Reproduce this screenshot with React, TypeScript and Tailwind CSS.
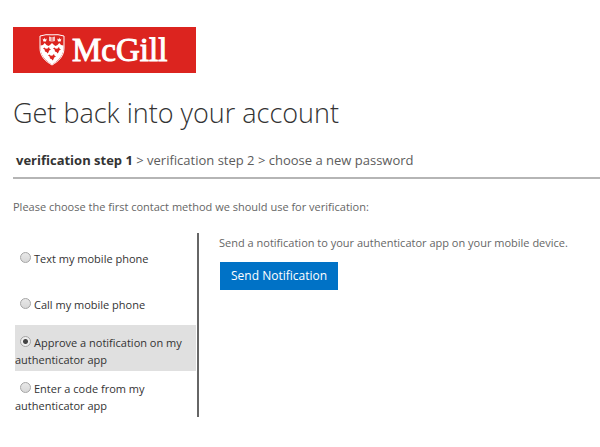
import React, { useState } from 'react'
import clsx from 'clsx'

interface ContactMethod {
  id: string
  label: string
}

const methods: ContactMethod[] = [
  { id: 'text', label: 'Text my mobile phone' },
  { id: 'call', label: 'Call my mobile phone' },
  { id: 'notification', label: 'Approve a notification on my authenticator app' },
  { id: 'code', label: 'Enter a code from my authenticator app' }
]

// Small red bird used three times on the shield
function Martlet({ x, y }: { x: number; y: number }) {
  return (
    <path
      transform={`translate(${x} ${y})`}
      d="M0 1.5 1.4.6 2.4 1.6 4.2 1.8 6 0 6.6 1.8 8 2.6 6.2 3.4 5.4 5.4 4.4 6.4 3.8 5.2 2 4.6 1.6 2.6Z"
      fill="#dc241f"
    />
  )
}

function Shield() {
  return (
    <svg width="26" height="32" viewBox="0 0 26 32" aria-hidden="true">
      <path
        d="M1 2Q7 0 13 .8 19 0 25 2V14C25 22 20 27 13 31 6 27 1 22 1 14Z"
        fill="#dc241f"
        stroke="#fff"
        strokeWidth="1"
      />
      {/* Book between the two crowns */}
      <path d="M10 2.5 13 3.2 16 2.5V7L13 7.7 10 7Z" fill="#f6c5c3" />
      <path d="M13 3.2V7.7" stroke="#dc241f" strokeWidth=".7" />
      <path
        d="M3.6 4.5 5 5.4 5.7 3.5 6.4 5.4 7.8 4.5 7 7.5H4.4ZM18.2 4.5 19.6 5.4 20.3 3.5 21 5.4 22.4 4.5 21.6 7.5H19Z"
        fill="#fff"
      />
      {/* Field with its peaked upper edge */}
      <path
        d="M1.5 11.5 4 11 5.7 9 7.5 11 9.5 12 11 11 13 9 15 11 16.5 12 18.5 11 20.3 9 22 11 24.5 11.5V14C24.5 21.5 19.5 26.5 13 30.5 6.5 26.5 1.5 21.5 1.5 14Z"
        fill="#fff"
      />
      <Martlet x={4} y={13} />
      <Martlet x={14} y={13} />
      <Martlet x={9} y={20} />
    </svg>
  )
}

function Logo() {
  return (
    <div className="flex h-[46px] w-[183px] items-center gap-[7px] bg-[#dc241f] pl-[26px]">
      <Shield />
      <span className="font-['Liberation_Serif',serif] text-[33px] leading-[46px] text-white [-webkit-text-stroke:1px_white]">
        McGill
      </span>
    </div>
  )
}

function Steps() {
  return (
    <p className="border-b-2 border-[#b5b5b5] pb-[7px] pl-[3px] text-[13px] leading-5 text-[#5c5c5c]">
      <strong className="font-bold text-[#333]">verification step 1</strong>
      {' > verification step 2 > choose a new password'}
    </p>
  )
}

export default function App() {
  const [selected, setSelected] = useState('notification')

  return (
    <main className="min-h-screen bg-white pt-[27px] pb-8 pl-[13px] font-['Open_Sans',sans-serif]">
      <Logo />
      <h1 className="mt-5 mb-[17px] text-[27px] leading-10 font-light text-[#333]">
        Get back into your account
      </h1>
      <Steps />

      <form onSubmit={(e) => e.preventDefault()}>
        <fieldset>
          <legend className="pt-[19px] text-[11px] leading-[17px] text-[#666]">
            Please choose the first contact method we should use for verification:
          </legend>
          <div className="mt-[18px] flex items-start">
            <div className="w-[186px] shrink-0 border-r-2 border-[#666] pr-px pl-0.5">
              {methods.map((method) => (
                <label
                  key={method.id}
                  className={clsx(
                    'flex min-h-[46px] items-center pt-[5px] text-[11px] leading-[17px] text-[#333]',
                    selected === method.id && 'bg-[#e0e0e0]'
                  )}
                >
                  <span>
                    <input
                      type="radio"
                      name="method"
                      value={method.id}
                      checked={selected === method.id}
                      onChange={() => setSelected(method.id)}
                      className="mr-[3px] ml-[5px] inline-block size-[11px] appearance-none rounded-full border border-[#a5a5a5] bg-linear-to-b from-[#e8e8e8] to-[#d8d8d8] checked:bg-[radial-gradient(circle,#444_2px,#eee_3px)]"
                    />
                    {method.label}
                  </span>
                </label>
              ))}
            </div>
            <div className="min-w-0 flex-1 pl-5">
              <p className="text-[11px] leading-5 text-[#666]">
                Send a notification to your authenticator app on your mobile device.
              </p>
              <button
                type="submit"
                className="mt-[9px] ml-px h-7 bg-[#0072c6] px-[11px] text-xs font-medium text-white"
              >
                Send Notification
              </button>
            </div>
          </div>
        </fieldset>
      </form>
    </main>
  )
}
